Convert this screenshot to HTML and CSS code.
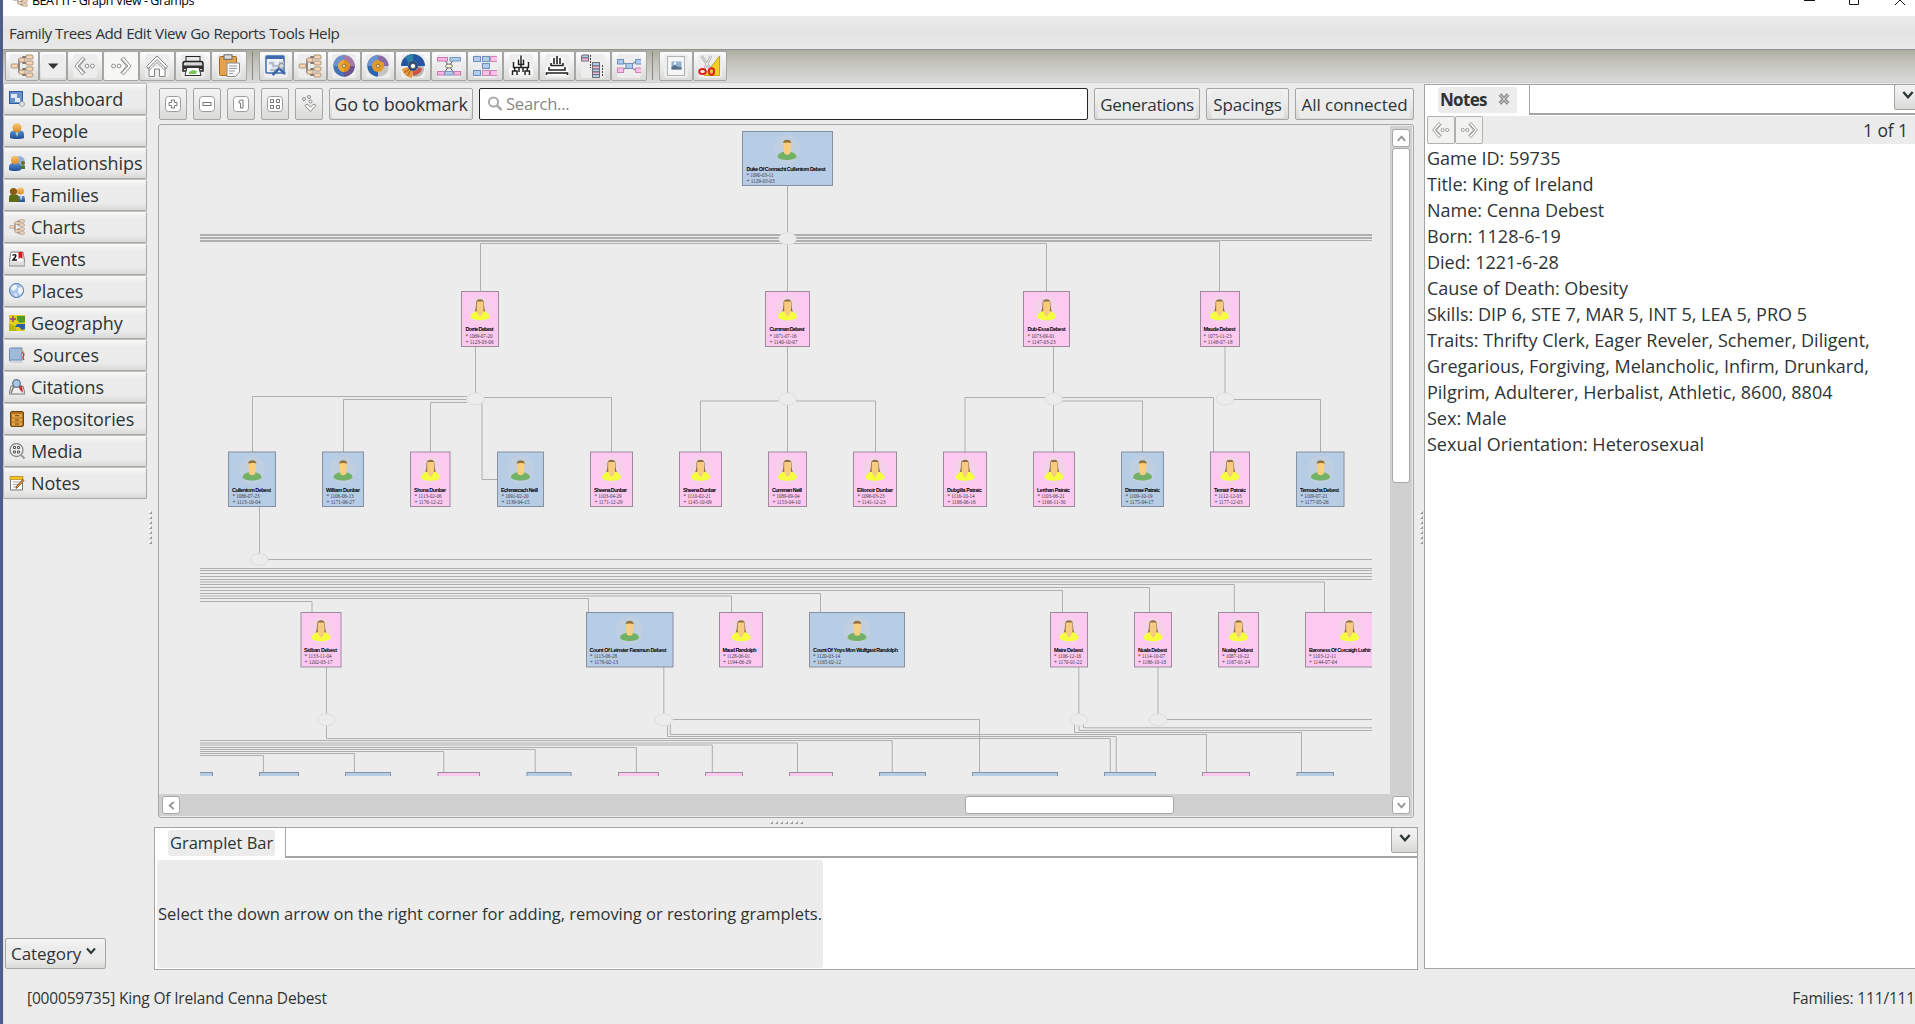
FILE: index.html
```html
<!DOCTYPE html>
<html lang="en">
<head>
<meta charset="utf-8">
<title>BEATTI - Graph View - Gramps</title>
<link rel="stylesheet" href="styles.css">
</head>
<body>
<svg class="defs" width="0" height="0">
  <defs>
    <linearGradient id="gold" x1="0" y1="0" x2="0" y2="1"><stop offset="0" stop-color="#f7c673"/><stop offset="1" stop-color="#dc8a22"/></linearGradient>
    <linearGradient id="navy" x1="0" y1="0" x2="0" y2="1"><stop offset="0" stop-color="#5b8fd0"/><stop offset="1" stop-color="#1f4d96"/></linearGradient>
    <symbol id="tree" viewBox="0 0 24 24">
      <path d="M5 12h4V6h4V3h5M13 6v3h5M9 12v6h4v-3h5M13 18v3h5" fill="none" stroke="#555" stroke-width="1.300"/>
      <g fill="#f3d6b6" stroke="#a98c70" stroke-width=".9"><rect x="1" y="10" width="7" height="4" rx="1"/><rect x="9" y="4" width="6" height="4" rx="1"/><rect x="9" y="16" width="6" height="4" rx="1"/><rect x="16" y="1" width="7" height="4" rx="1"/><rect x="16" y="7" width="7" height="4" rx="1"/><rect x="16" y="13" width="7" height="4" rx="1"/><rect x="16" y="19" width="7" height="4" rx="1"/></g>
    </symbol>
    <symbol id="prev" viewBox="0 0 24 24"><path d="M9.500 3l2 2-6.500 7 6.500 7-2 2L2 12z" fill="#fff" stroke="#8b8e8a"/><path d="M12.500 5L6.500 12l6 7" fill="none" stroke="#8b8e8a"/><circle cx="14" cy="12" r="1.900" fill="#fff" stroke="#8b8e8a"/><circle cx="19.500" cy="12" r="1.900" fill="#fff" stroke="#8b8e8a"/></symbol>
    <symbol id="next" viewBox="0 0 24 24"><g transform="matrix(-1 0 0 1 24 0)"><path d="M9.500 3l2 2-6.500 7 6.500 7-2 2L2 12z" fill="#fff" stroke="#8b8e8a"/><path d="M12.500 5L6.500 12l6 7" fill="none" stroke="#8b8e8a"/><circle cx="14" cy="12" r="1.900" fill="#fff" stroke="#8b8e8a"/><circle cx="19.500" cy="12" r="1.900" fill="#fff" stroke="#8b8e8a"/></g></symbol>
    <symbol id="chev" viewBox="0 0 12 12"><path d="M2 3.500l4 4.500 4-4.500" fill="none" stroke="currentColor" stroke-width="2"/></symbol>
    <symbol id="man" viewBox="0 0 28 32">
      <ellipse cx="14" cy="16" rx="13" ry="14.500" fill="#c9d2da" opacity=".5"/>
      <path d="M4.500 23.500c0-3.500 4-5 7-5h5c3 0 7 1.500 7 5-2 4-17 4-19 0z" fill="#73b266"/>
      <path d="M10.500 8h7.500v6c0 2-.8 2.500-.8 3.500v2.500c-1 1.500-5 1.500-6 0v-2.500c0-1-.7-1.500-.7-3.500z" fill="#f9ce7e"/>
      <path d="M10.200 9.500c-.5-4.500 8.500-4.500 8 0-2-.7-6-.7-8 0z" fill="#93743c"/>
    </symbol>
    <symbol id="woman" viewBox="0 0 28 32">
      <ellipse cx="14" cy="16" rx="12" ry="14" fill="#ecd6e4" opacity=".6"/>
      <path d="M10 9c0-4.500 8-4.500 8 0 0 5 .6 7 1.600 10H8.500c1-3 1.500-5 1.500-10z" fill="#8f6f42"/>
      <path d="M4.500 24c0-3.500 3.500-6.500 7.500-6.500h4c4 0 7.500 3 7.500 6.500-3 3.500-16 3.500-19 0z" fill="#f6ff3d"/>
      <path d="M10.700 8h6.800v7c0 3.500-.7 6-3.400 8.500-2.700-2.500-3.400-5-3.400-8.500z" fill="#f8cc80"/>
    </symbol>
  </defs>
</svg>
<div class="window">
  <header class="titlebar">
    <svg class="title-icon" width="16" height="16"><use href="#tree"/></svg>
    <span class="title-text">BEATTI - Graph View - Gramps</span>
    <svg class="controls" width="111" height="16" viewBox="0 0 111 16"><path d="M0 8.500h11M45.500 2.500h9v10h-9zM91 3l10 10M101 3l-10 10" fill="none" stroke="#111"/></svg>
  </header>
  <nav class="menubar"><span>Family Trees</span><span>Add</span><span>Edit</span><span>View</span><span>Go</span><span>Reports</span><span>Tools</span><span>Help</span></nav>
  <div class="toolbar">
    <button class="tb w34"><svg><use href="#tree"/></svg></button>
    <button class="tb w28"><svg viewBox="0 0 24 24"><path d="M7 9.500h10.500L12.200 15z" fill="#333"/></svg></button>
    <button class="tb"><svg><use href="#prev"/></svg></button>
    <button class="tb light"><svg><use href="#next"/></svg></button>
    <button class="tb"><svg viewBox="0 0 24 24"><path d="M4 13v9.500h5.500V15h5v7.500H20V13M3 14.500L1.500 12.500 12 2l10.500 10.500-1.500 2-9-9z" fill="#fff" stroke="#80837f"/><path d="M4 16.500l8-8 8 8" fill="none" stroke="#999"/></svg></button>
    <button class="tb"><svg viewBox="0 0 24 24"><rect x="5" y="2.500" width="14" height="6" fill="#e8e8e8" stroke="#222"/><path d="M2 10c0-1.500 1-2.500 2-2.500h16c1 0 2 1 2 2.500v7H2z" fill="#d7d7d7" stroke="#222" stroke-width="1.500"/><path d="M2 11.500h20v3.500H2z" fill="#333"/><path d="M6 13.500h12l2 8H4z" fill="#fff" stroke="#333"/><path d="M8 18l4-2 4 1-1 3H8z" fill="#7cc35d"/></svg></button>
    <button class="tb"><svg viewBox="0 0 24 24"><rect x="2.500" y="2.500" width="17" height="19" rx="1" fill="#e3a34c" stroke="#a36b1e"/><rect x="7" y=".8" width="8" height="4.500" fill="#ddd" stroke="#666"/><path d="M10 9h12.500v9l-4 4.500H10z" fill="#fafafa" stroke="#8a8a8a"/><path d="M12 12h8M12 14.500h8M12 17h6M12 19.500h4" stroke="#9a9a9a"/></svg></button>
    <i class="sep"></i>
    <button class="tb w34"><svg viewBox="0 0 24 24"><rect x="2" y="2" width="18" height="17" rx="1" fill="#eef2f7" stroke="#3f6cae" stroke-width="1.500"/><path d="M2 3.500h18" stroke="#3f6cae" stroke-width="3"/><path d="M5 9h4v3h7v-3h4M6 16h6" stroke="#b7bdc6" stroke-width="2.500" fill="none"/><path d="M8.500 21l7-7M16 15l5 5" stroke="#3b68a8" stroke-width="2.500"/><circle cx="17.500" cy="12" r="2.600" fill="#d0d5da" stroke="#8b929b"/></svg></button>
    <button class="tb w34"><svg><use href="#tree"/></svg></button>
    <button class="tb w34"><svg viewBox="0 0 24 24"><circle cx="12" cy="12" r="10.700" fill="#4573b5"/><path d="M12 12V1.300A10.700 10.700 0 0 1 22.700 12z" fill="#a97aa8"/><path d="M12 12h10.700A10.700 10.700 0 0 1 12 22.700z" fill="#71548f"/><path d="M12 12V1.300A10.700 10.700 0 0 0 1.300 12z" fill="#6c93cf"/><circle cx="12" cy="12" r="6" fill="#df9420"/><path d="M12 6a6 6 0 0 0 0 12z" fill="#e9a63d"/><circle cx="12" cy="12" r="1.800" fill="#d8d8c8" stroke="#a87324"/></svg></button>
    <button class="tb w34"><svg viewBox="0 0 24 24"><circle cx="14" cy="14" r="8.500" fill="#c4c4c4"/><path d="M12 1.300A10.700 10.700 0 1 0 12 22.700z" fill="#2f65ac"/><path d="M12 12V1.300A10.700 10.700 0 0 0 1.300 12z" fill="#6c93cf"/><path d="M12 12V1.300A10.700 10.700 0 0 1 22.700 12z" fill="#8a69a4"/><path d="M12 6a6 6 0 1 0 0 12 6 6 0 0 0 6-6V9z" fill="#e39b28"/><circle cx="12" cy="12" r="1.800" fill="#d8d8c8" stroke="#a87324"/></svg></button>
    <button class="tb"><svg viewBox="0 0 24 24"><circle cx="15" cy="15" r="8" fill="#b8b8b8"/><path d="M0 12a12 12 0 0 1 24 0h-7a5 5 0 0 0-10 0z" fill="#2456a5"/><path d="M4 3.500A12 12 0 0 1 12 0v7a5 5 0 0 0-4 2z" fill="#2e84a5"/><path d="M7 13a5 5 0 0 0 5 4l-1 7C5 23 2 19 1 15z" fill="#e8973a"/><path d="M3 18.500l5-3M6.500 22l3-5.500" stroke="#a75c16"/><path d="M12 17c3 0 5-1 5.500-4l3.500 2c-1 4-5 6-9 7z" fill="#cf5144"/><circle cx="12" cy="12" r="5" fill="#294b7d"/><circle cx="12" cy="12" r="2.600" fill="#fff" stroke="#555"/></svg></button>
    <button class="tb"><svg viewBox="0 0 24 24"><path d="M7 5l10 14M17 5L7 19" stroke="#555"/><rect x=".5" y="3.500" width="10" height="3.500" fill="#f8b7e3" stroke="#c878ae"/><rect x="13" y="3.500" width="10.500" height="3.500" fill="#aecbec" stroke="#7799c2"/><rect x=".5" y="17.500" width="7" height="3.500" fill="#f8b7e3" stroke="#c878ae"/><rect x="8" y="17.500" width="8" height="3.500" fill="#aecbec" stroke="#7799c2"/><rect x="17" y="17.500" width="6.500" height="3.500" fill="#f8b7e3" stroke="#c878ae"/><ellipse cx="12" cy="12" rx="3.500" ry="2" fill="#f7f4cc" stroke="#777"/></svg></button>
    <button class="tb"><svg viewBox="0 0 24 24"><g fill="#b3ccec" stroke="#6e8fc0"><rect x=".5" y="2.500" width="7" height="5"/><rect x="9.500" y="2.500" width="7" height="5"/><rect x="9.500" y="9.500" width="7" height="5"/><rect x=".5" y="16.500" width="7" height="5"/></g><g fill="#fcbfe8" stroke="#ce84b6"><path d="M24 2.500h-6.500v5H24M24 16.500h-6.500v5H24"/><rect x="9.500" y="16.500" width="7" height="5"/></g></svg></button>
    <button class="tb"><svg viewBox="0 0 24 24"><path d="M12 2v11M9 5v5h6V5M5 9v4h14V9M3 20v-3h5v3M5.500 17v-4M16 20v-3h5v3M18.500 17v-4M9 21v-7M15 21v-7" stroke="#fff" stroke-width="5" fill="none"/><path d="M12 1.500v12M9.500 5.500v5h5v-5M4.500 8v5.500h15V8M3.500 21v-4H8v4M5.700 17v-4M16 21v-4h4.500v4M18.300 17v-4M10 18v-4.500M14 18v-4.500" stroke="#222" stroke-width="1.500" fill="none"/></svg></button>
    <button class="tb"><svg viewBox="0 0 24 24"><path d="M12 2v9M8 3v8h8V3M4 12v4h16v-4M1 21v-2h22v2" stroke="#fff" stroke-width="5" fill="none"/><path d="M12 2v8M9 4v6M15 4v6M6 9v2.500h12V9M4 13v3h16v-3M1.500 21v-2h21v2" stroke="#222" stroke-width="1.600" fill="none"/></svg></button>
    <button class="tb"><svg viewBox="0 0 24 24"><path d="M9.500 1v13M21.500 11v12" stroke="#444" stroke-dasharray="2 1"/><g stroke="#666" stroke-width=".9"><rect x=".5" y="1" width="7" height="3" fill="#aecbec"/><rect x=".5" y="4" width="7" height="3" fill="#f8b7e3"/><rect x="11.500" y="8.500" width="7" height="3.500" fill="#aecbec"/><rect x="11.500" y="12" width="7" height="3" fill="#f8b7e3"/><rect x="11.500" y="15" width="7" height="3" fill="#aecbec"/><rect x="11.500" y="18" width="7" height="2.500" fill="#f8b7e3"/><rect x="11.500" y="20.500" width="7" height="3" fill="#aecbec"/></g></svg></button>
    <button class="tb"><svg viewBox="0 0 24 24"><path d="M6 8l5 4-5 4M18 8l-5 4 5 4" stroke="#666" fill="none"/><g fill="#aecbec" stroke="#6e8fc0"><rect x=".5" y="5.500" width="6" height="4.500"/><rect x="9" y="9.500" width="6.500" height="5"/><path d="M24 5.500h-5.500V10H24"/></g><g fill="#fcbfe8" stroke="#ce84b6"><rect x=".5" y="14" width="6" height="4.500"/><path d="M24 14h-5.500v4.500H24"/></g></svg></button>
    <i class="sep"></i>
    <button class="tb w34"><svg viewBox="0 0 24 24"><rect x="3.500" y="2.500" width="17" height="19" fill="#f5f5f5" stroke="#b3b3b3"/><rect x="7.500" y="7.500" width="10" height="8" fill="#90b0d4"/><path d="M7.500 13l3-2 4 2h3v2.500h-10z" fill="#5d7186"/><circle cx="11" cy="9.500" r="1.200" fill="#fff"/></svg></button>
    <button class="tb w34"><svg viewBox="0 0 24 24"><path d="M21.500 2v19.500h-15z" fill="#f2cf2b" stroke="#c9a513"/><path d="M3.500 2l9 13M13 2L6.500 15" stroke="#aaa" stroke-width="2.500"/><path d="M3.500 2l9 13M13 2L6.500 15" stroke="#f3f3f3" stroke-width="1"/><ellipse cx="4.500" cy="17.500" rx="3.300" ry="2.500" fill="none" stroke="#d22" stroke-width="2"/><ellipse cx="13.500" cy="17.500" rx="2.600" ry="3.200" fill="none" stroke="#d22" stroke-width="2"/></svg></button>
  </div>
  <div class="workspace">
    <aside class="sidebar">
      <div class="nav"><svg viewBox="0 0 16 16"><rect x=".5" y=".5" width="13" height="12" fill="#6691cb" stroke="#2f5b9c"/><path d="M2 3h6v4H2zM6 7h5v4H6z" fill="#dfe8f3"/><circle cx="13" cy="13" r="2.500" fill="#e3e3e3" stroke="#9aa"/></svg><span>Dashboard</span></div>
      <div class="nav"><svg viewBox="0 0 16 16"><path d="M1 15V11c0-3 3-3.500 4-3.500h6c2 0 4 1 4 3.500v4c-3 1.300-11 1.300-14 0z" fill="url(#navy)"/><path d="M8 8l1.500 2L8 14l-1.500-4z" fill="#9cc"/><circle cx="8" cy="4.700" r="4.500" fill="url(#gold)"/></svg><span>People</span></div>
      <div class="nav"><svg viewBox="0 0 16 16"><circle cx="10" cy="7" r="6" fill="#8fb2dd"/><path d="M0 15v-3c0-3 2-4 4-4h4c2 0 4 1 4 4v3c-3 1.300-9 1.300-12 0z" fill="url(#navy)"/><circle cx="6" cy="5" r="4.200" fill="url(#gold)"/><circle cx="14" cy="8" r="2" fill="#7a6a22"/><path d="M11.500 14v-3.500h4.500V14z" fill="#447a37"/></svg><span>Relationships</span></div>
      <div class="nav"><svg viewBox="0 0 16 16"><path d="M9 15V9h6c1 0 1 5 1 6z" fill="url(#navy)"/><path d="M12 8l1 2-1 4-1-4z" fill="#dde"/><circle cx="11.500" cy="4" r="3.600" fill="url(#gold)"/><path d="M0 15v-4c0-3 2-3.500 3-3.500h4c1 0 3 1 3 3.500v4z" fill="#5d6d16"/><circle cx="4.500" cy="4.500" r="3.600" fill="#8b5c14"/></svg><span>Families</span></div>
      <div class="nav"><svg><use href="#tree"/></svg><span>Charts</span></div>
      <div class="nav"><svg viewBox="0 0 16 16"><path d="M2 1h12l2 11v3H0v-3z" fill="#ddd" stroke="#888"/><rect x="2" y="2" width="12" height="8.500" fill="#fff"/><path d="M9.500 1h4v7l-2-1.500-2 1.500z" fill="#d4151d"/><path d="M3.500 4.500c3-2 4 0 2.500 2L4 9h4" fill="none" stroke="#111" stroke-width="1.500"/></svg><span>Events</span></div>
      <div class="nav"><svg viewBox="0 0 16 16"><circle cx="7.500" cy="7.500" r="7" fill="#a9c7e8" stroke="#4f78ad"/><path d="M3 3l4-1.500 1 3L5 8 2 6zM9 5l4-1 1 4-3 4-2-3zM5 10l3 1-1 3z" fill="#f2f6fb"/></svg><span>Places</span></div>
      <div class="nav"><svg viewBox="0 0 16 16"><rect width="16" height="16" fill="#e0d020"/><path d="M8 1h8v6l-5 1-3-3z" fill="#4b9c26"/><path d="M8 9h8v5l-3 1-3-3-4 0z" fill="#2c5fa8"/><path d="M4 1v6M1 4h6" stroke="#9a3a9a" stroke-width="1.500"/><path d="M0 9l5 1 3 6H0z" fill="#b9b616"/></svg><span>Geography</span></div>
      <div class="nav wide"><svg viewBox="0 0 16 16"><path d="M2 1h11v12H2c-1 0-1.500.5-1.500 1V2.500C.5 1.500 1 1 2 1z" fill="#9fb9da" stroke="#6c89b3"/><path d="M1 13.500h12V15H1z" fill="#f2f2f2" stroke="#8a9cb8" stroke-width=".6"/><path d="M13 5l2 2-1 4 1 2" stroke="#d33" fill="none" stroke-width="1.300"/><path d="M13 2l1.500 3" stroke="#db3"/></svg><span>Sources</span></div>
      <div class="nav"><svg viewBox="0 0 16 16"><path d="M2 7h12l2 8H0z" fill="#efefef" stroke="#777"/><path d="M9 7h4l1 7-3-3z" fill="#c93030"/><path d="M5 7l-3 7" stroke="#777" stroke-width="1.500"/><circle cx="7.500" cy="4.500" r="3.800" fill="#a9c5e6" stroke="#5f7896" stroke-width="1.300"/></svg><span>Citations</span></div>
      <div class="nav"><svg viewBox="0 0 16 16"><rect x="1.500" y=".5" width="13" height="15" rx="1.500" fill="#b0711f" stroke="#70430f"/><rect x="3" y="3" width="10" height="3.500" fill="#e3a748"/><rect x="3" y="7.500" width="10" height="3" fill="#e3a748"/><rect x="3" y="11.500" width="10" height="3" fill="#e3a748"/><path d="M6 4.700h4M6 9h4M6 13h4" stroke="#70430f"/></svg><span>Repositories</span></div>
      <div class="nav"><svg viewBox="0 0 16 16"><circle cx="7.500" cy="7" r="6.500" fill="#ececec" stroke="#858a85" stroke-width="1.300"/><path d="M12 12l3.500 3.500" stroke="#999" stroke-width="2"/><path d="M4.500 3.500h2v2h-2zM8.500 3.500h2v2h-2zM4.500 8h2v2h-2zM8.500 8h2v2h-2z" fill="#fff" stroke="#555"/></svg><span>Media</span></div>
      <div class="nav"><svg viewBox="0 0 16 16"><path d="M1.500 2h12v13h-12z" fill="#fbfbfb" stroke="#777"/><path d="M1 1.500h13v3H1z" fill="#f2c32a" stroke="#b8860b" stroke-width=".7"/><path d="M4 7h7M4 9.500h6M4 12h5" stroke="#aaa"/><path d="M15 5.500l-6.500 7-1.500 1 .3-2 6.200-7z" fill="#e99a3c" stroke="#5a3a12" stroke-width=".7"/></svg><span>Notes</span></div>
      <div class="category"><span>Category</span><svg width="12" height="12"><use href="#chev"/></svg></div>
    </aside>
    <div class="grip tall"><i></i><i></i><i></i><i></i><i></i><i></i><i></i></div>
    <main class="center">
      <div class="viewbar">
        <button class="vb"><svg viewBox="0 0 18 18"><rect x="1.500" y="1.500" width="15" height="15" rx="3" fill="#fff" stroke="#9a9d99"/><path d="M7.500 5h3v2.500H13v3h-2.500V13h-3v-2.500H5v-3h2.500z" fill="#fff" stroke="#777"/></svg></button>
        <button class="vb"><svg viewBox="0 0 18 18"><rect x="1.500" y="1.500" width="15" height="15" rx="3" fill="#fff" stroke="#9a9d99"/><rect x="5" y="7.500" width="8" height="3" fill="#fff" stroke="#777"/></svg></button>
        <button class="vb"><svg viewBox="0 0 18 18"><rect x="1.500" y="1.500" width="15" height="15" rx="3" fill="#fff" stroke="#9a9d99"/><path d="M7 6l2-1h2v8H8.500V8H7z" fill="#fff" stroke="#777"/></svg></button>
        <button class="vb"><svg viewBox="0 0 18 18"><rect x="1.500" y="1.500" width="15" height="15" rx="3" fill="#fff" stroke="#9a9d99"/><path d="M4.500 7.500v-3h3v3zM10.500 7.500v-3h3v3zM4.500 13.500v-3h3v3zM10.500 13.500v-3h3v3z" fill="#fff" stroke="#777"/></svg></button>
        <button class="vb"><svg viewBox="0 0 18 18"><g fill="#fff" stroke="#858885"><circle cx="4" cy="4" r="1.500"/><circle cx="9" cy="2" r="1.500"/><circle cx="10.500" cy="6.500" r="1.500"/><path d="M5 10.500l2-1.500 3.500 3L14 9l2 1.500-5.500 6z"/></g></svg></button>
        <button class="txt go"><span>Go to bookmark</span></button>
        <div class="search"><svg width="16" height="16" viewBox="0 0 16 16"><circle cx="6.500" cy="6" r="4.600" fill="none" stroke="#aaacaa" stroke-width="2"/><path d="M10 9.500l4.500 4.500" stroke="#aaacaa" stroke-width="2.500"/></svg><span>Search...</span></div>
        <button class="txt gen"><span>Generations</span></button>
        <button class="txt spa"><span>Spacings</span></button>
        <button class="txt all"><span>All connected</span></button>
      </div>
      <section class="graph">
        <svg class="canvas" viewBox="159 125 1231 669" width="1231" height="669">
          <clipPath id="page"><rect x="200" y="125" width="1172" height="651"/></clipPath>
          <g clip-path="url(#page)">
            <g class="edges">
              <path class="band" d="M200 235h1172M200 238h1172M200 241h1019.500"/>
              <path d="M1219 240.500h153M787.500 241.500h432v50M480.500 291v-47.500h566V291M787.500 185v47M787.500 244v47"/>
              <path d="M475.500 346v47M467 396.500H252.500V452M467 399.500H343.500V452M467 402.500H430.500V452M484 397.500h127.500V452M482 403v76.500h16"/>
              <path d="M787.500 346v47M787.500 405v47M779 401H700.500v51M796 401h79.500v51"/>
              <path d="M1053.500 346v47M1053.500 405v47M1045 397.500H965V452M1062 397.500h151.500V452M1062 401h80.500v51"/>
              <path d="M1225 346v47M1233 399.500h87.500V452"/>
              <path d="M259.500 506v47M268 559.500h1104"/>
              <path d="M200 568.500h1172M200 570.500h1172M200 573.500h1172M200 576.500h1172M200 579.500h1172M200 582h1124.500v30M200 584.500h1034.300V612M200 587.500h949.500V612M200 590.500h862.500V612M200 593.500h620.500V612M200 596h531.500v16M200 598.500h388.500V612M200 601.500h112V612"/>
              <path d="M326.500 667v47M326.500 726v12.500h783.800V773M663.800 667v47M672 719.500h307.500V773M667.500 724v12.500h448.700V773M670.300 724v10.500h536.200V773"/>
              <path d="M1078.800 667v47M1074.500 724v8.500h227V773M1079 726v4.500h293M1083.500 724.500v3.300H1372M1158 667v47M1166 719.500h206"/>
              <path d="M200 740.500h692.200V773M200 743h597.500v30M200 745h512.300v28M200 747.500h436.300V773M200 749.500h335.200V773M200 751.500h243.800V773M200 753.500h154.400V773M200 755.500h63.400V773"/>
            </g>
            <g class="joints"><ellipse cx="787.500" cy="238.700"/><ellipse cx="475.500" cy="399"/><ellipse cx="787.500" cy="399"/><ellipse cx="1053.700" cy="399"/><ellipse cx="1225" cy="399"/><ellipse cx="259" cy="559.500"/><ellipse cx="326.500" cy="719.800"/><ellipse cx="663.700" cy="719.800"/><ellipse cx="1078.800" cy="719.800"/><ellipse cx="1158" cy="719.800"/></g>

            <g class="m" transform="translate(742.500 131.500)"><rect width="90" height="54"/><use href="#man" x="30.500" y="2" width="28" height="32"/><text class="n" x="4" y="39.500" textLength="79">Duke Of Connacht Cullentom Debest</text><text class="d" x="4" y="45.500" textLength="27">* 1090-03-11</text><text class="d" x="4" y="51.500" textLength="28">+ 1129-03-03</text></g>

            <g class="f" transform="translate(461.500 291.500)"><rect width="37" height="55"/><use href="#woman" x="4.500" y="2" width="28" height="32"/><text class="n" x="4" y="39.500" textLength="28">Dorrie Debest</text><text class="d" x="4" y="46" textLength="27">* 1069-07-20</text><text class="d" x="4" y="52" textLength="28">+ 1123-03-06</text></g>
            <g class="f" transform="translate(765.500 291.500)"><rect width="44" height="55"/><use href="#woman" x="8" y="2" width="28" height="32"/><text class="n" x="4" y="39.500" textLength="35">Cumman Debest</text><text class="d" x="4" y="46" textLength="27">* 1071-07-16</text><text class="d" x="4" y="52" textLength="28">+ 1140-10-07</text></g>
            <g class="f" transform="translate(1023.500 291.500)"><rect width="46" height="55"/><use href="#woman" x="9" y="2" width="28" height="32"/><text class="n" x="4" y="39.500" textLength="38">Dub-Essa Debest</text><text class="d" x="4" y="46" textLength="27">* 1073-09-01</text><text class="d" x="4" y="52" textLength="28">+ 1147-03-23</text></g>
            <g class="f" transform="translate(1200.500 291.500)"><rect width="39" height="55"/><use href="#woman" x="5" y="2" width="28" height="32"/><text class="n" x="3" y="39.500" textLength="32">Maude Debest</text><text class="d" x="3" y="46" textLength="28">* 1075-11-23</text><text class="d" x="3" y="52" textLength="29">+ 1148-07-18</text></g>

            <g class="m" transform="translate(228.500 452)"><rect width="47" height="54.500"/><use href="#man" x="9.500" y="2" width="28" height="32"/><text class="n" x="3.500" y="40" textLength="39">Cullentom Debest</text><text class="d" x="4" y="45.500" textLength="27">* 1086-07-23</text><text class="d" x="4" y="51.500" textLength="28">+ 1113-10-04</text></g>
            <g class="m" transform="translate(322.500 452)"><rect width="41" height="54.500"/><use href="#man" x="6.500" y="2" width="28" height="32"/><text class="n" x="3.500" y="40" textLength="34">William Dunbar</text><text class="d" x="4" y="45.500" textLength="27">* 1106-06-13</text><text class="d" x="4" y="51.500" textLength="28">+ 1171-06-27</text></g>
            <g class="f" transform="translate(410.500 452)"><rect width="39.500" height="54.500"/><use href="#woman" x="6" y="2" width="28" height="32"/><text class="n" x="3.500" y="40" textLength="32">Shona Dunbar</text><text class="d" x="4" y="45.500" textLength="27">* 1113-02-06</text><text class="d" x="4" y="51.500" textLength="28">+ 1176-12-22</text></g>
            <g class="m" transform="translate(497.500 452)"><rect width="46" height="54.500"/><use href="#man" x="9" y="2" width="28" height="32"/><text class="n" x="3.500" y="40" textLength="37">Echmarcach Neill</text><text class="d" x="4" y="45.500" textLength="27">* 1091-02-20</text><text class="d" x="4" y="51.500" textLength="28">+ 1139-04-15</text></g>
            <g class="f" transform="translate(590.500 452)"><rect width="42" height="54.500"/><use href="#woman" x="7" y="2" width="28" height="32"/><text class="n" x="3.500" y="40" textLength="33">Sheena Dunbar</text><text class="d" x="4" y="45.500" textLength="27">* 1103-04-29</text><text class="d" x="4" y="51.500" textLength="28">+ 1171-12-29</text></g>
            <g class="f" transform="translate(679.500 452)"><rect width="42" height="54.500"/><use href="#woman" x="7" y="2" width="28" height="32"/><text class="n" x="3.500" y="40" textLength="33">Sheena Dunbar</text><text class="d" x="4" y="45.500" textLength="27">* 1110-02-21</text><text class="d" x="4" y="51.500" textLength="28">+ 1145-10-09</text></g>
            <g class="f" transform="translate(768.500 452)"><rect width="38" height="54.500"/><use href="#woman" x="5" y="2" width="28" height="32"/><text class="n" x="3.500" y="40" textLength="30">Cumman Neill</text><text class="d" x="4" y="45.500" textLength="27">* 1089-09-04</text><text class="d" x="4" y="51.500" textLength="28">+ 1153-04-10</text></g>
            <g class="f" transform="translate(853.500 452)"><rect width="43" height="54.500"/><use href="#woman" x="7.500" y="2" width="28" height="32"/><text class="n" x="3.500" y="40" textLength="36">Ellionoir Dunbar</text><text class="d" x="4" y="45.500" textLength="27">* 1096-03-23</text><text class="d" x="4" y="51.500" textLength="28">+ 1141-12-23</text></g>
            <g class="f" transform="translate(943.500 452)"><rect width="43" height="54.500"/><use href="#woman" x="7.500" y="2" width="28" height="32"/><text class="n" x="3.500" y="40" textLength="35">Dubgilla Patraic</text><text class="d" x="4" y="45.500" textLength="27">* 1116-10-14</text><text class="d" x="4" y="51.500" textLength="28">+ 1166-06-16</text></g>
            <g class="f" transform="translate(1033.500 452)"><rect width="41" height="54.500"/><use href="#woman" x="6.500" y="2" width="28" height="32"/><text class="n" x="3.500" y="40" textLength="33">Lerthan Patraic</text><text class="d" x="4" y="45.500" textLength="27">* 1103-06-21</text><text class="d" x="4" y="51.500" textLength="28">+ 1166-11-30</text></g>
            <g class="m" transform="translate(1121.500 452)"><rect width="42" height="54.500"/><use href="#man" x="7" y="2" width="28" height="32"/><text class="n" x="3.500" y="40" textLength="35">Dimmae Patraic</text><text class="d" x="4" y="45.500" textLength="27">* 1109-10-19</text><text class="d" x="4" y="51.500" textLength="28">+ 1175-04-17</text></g>
            <g class="f" transform="translate(1210.500 452)"><rect width="39" height="54.500"/><use href="#woman" x="5.500" y="2" width="28" height="32"/><text class="n" x="3.500" y="40" textLength="32">Temair Patraic</text><text class="d" x="4" y="45.500" textLength="27">* 1112-12-03</text><text class="d" x="4" y="51.500" textLength="28">+ 1177-12-03</text></g>
            <g class="m" transform="translate(1296.500 452)"><rect width="47.500" height="54.500"/><use href="#man" x="10" y="2" width="28" height="32"/><text class="n" x="3.500" y="40" textLength="39">Temsacha Debest</text><text class="d" x="4" y="45.500" textLength="27">* 1109-07-21</text><text class="d" x="4" y="51.500" textLength="28">+ 1177-05-26</text></g>

            <g class="f" transform="translate(301 612.500)"><rect width="40" height="54.500"/><use href="#woman" x="6" y="2" width="28" height="32"/><text class="n" x="3" y="39.500" textLength="33">Sidban Debest</text><text class="d" x="3.500" y="45" textLength="27">* 1133-11-04</text><text class="d" x="3.500" y="51.500" textLength="28">+ 1202-03-17</text></g>
            <g class="m" transform="translate(586.500 612.500)"><rect width="86.500" height="54.500"/><use href="#man" x="29" y="2" width="28" height="32"/><text class="n" x="3" y="39.500" textLength="77">Count Of Leinster Faramun Debest</text><text class="d" x="3.500" y="45" textLength="27">* 1113-06-28</text><text class="d" x="3.500" y="51.500" textLength="28">+ 1176-02-13</text></g>
            <g class="f" transform="translate(719.500 612.500)"><rect width="43" height="54.500"/><use href="#woman" x="7.500" y="2" width="28" height="32"/><text class="n" x="3" y="39.500" textLength="34">Maud Randolph</text><text class="d" x="3.500" y="45" textLength="27">* 1128-06-01</text><text class="d" x="3.500" y="51.500" textLength="28">+ 1194-06-29</text></g>
            <g class="m" transform="translate(809.500 612.500)"><rect width="95" height="54.500"/><use href="#man" x="33.500" y="2" width="28" height="32"/><text class="n" x="3.500" y="39.500" textLength="85">Count Of Ynys Mon Wulfgast Randolph</text><text class="d" x="3.500" y="45" textLength="27">* 1120-03-14</text><text class="d" x="3.500" y="51.500" textLength="28">+ 1165-02-12</text></g>
            <g class="f" transform="translate(1050.500 612.500)"><rect width="37" height="54.500"/><use href="#woman" x="4.500" y="2" width="28" height="32"/><text class="n" x="3.500" y="39.500" textLength="29">Maire Debest</text><text class="d" x="3.500" y="45" textLength="27">* 1106-12-16</text><text class="d" x="3.500" y="51.500" textLength="28">+ 1170-01-22</text></g>
            <g class="f" transform="translate(1134.500 612.500)"><rect width="37" height="54.500"/><use href="#woman" x="4.500" y="2" width="28" height="32"/><text class="n" x="3.500" y="39.500" textLength="29">Nuala Debest</text><text class="d" x="3.500" y="45" textLength="27">* 1114-10-07</text><text class="d" x="3.500" y="51.500" textLength="28">+ 1186-10-18</text></g>
            <g class="f" transform="translate(1218.500 612.500)"><rect width="40" height="54.500"/><use href="#woman" x="6" y="2" width="28" height="32"/><text class="n" x="3.500" y="39.500" textLength="31">Nualay Debest</text><text class="d" x="3.500" y="45" textLength="27">* 1087-10-22</text><text class="d" x="3.500" y="51.500" textLength="28">+ 1167-01-24</text></g>
            <g class="f" transform="translate(1305.500 612.500)"><rect width="88" height="54.500"/><use href="#woman" x="30" y="2" width="28" height="32"/><text class="n" x="3.500" y="39.500" textLength="62">Baroness Of Corcaigh Luthir</text><text class="d" x="3.500" y="45" textLength="27">* 1103-12-11</text><text class="d" x="3.500" y="51.500" textLength="28">+ 1144-07-04</text></g>

            <g class="m"><rect x="180" y="772.500" width="32.500" height="54"/><rect x="259.500" y="772.500" width="39" height="54"/><rect x="345.500" y="772.500" width="45" height="54"/><rect x="527" y="772.500" width="44" height="54"/><rect x="879.500" y="772.500" width="46" height="54"/><rect x="972.500" y="772.500" width="85" height="54"/><rect x="1104.500" y="772.500" width="51" height="54"/><rect x="1297" y="772.500" width="36.500" height="54"/></g>
            <g class="f"><rect x="438" y="772.500" width="41.500" height="54"/><rect x="618.500" y="772.500" width="40" height="54"/><rect x="705.500" y="772.500" width="37" height="54"/><rect x="789.500" y="772.500" width="43" height="54"/><rect x="1202.500" y="772.500" width="47" height="54"/></g>
          </g>
        </svg>
        <div class="vscroll"><b class="step up"><svg width="12" height="12"><use href="#chev"/></svg></b><b class="vthumb"></b></div>
        <div class="hscroll"><b class="step left"><svg width="12" height="12"><use href="#chev"/></svg></b><b class="hthumb"></b><b class="step down"><svg width="12" height="12"><use href="#chev"/></svg></b></div>
      </section>
      <div class="grip wide-grip"><i></i><i></i><i></i><i></i><i></i><i></i><i></i></div>
      <section class="gramplets">
        <div class="tabs"><div class="tab"><span>Gramplet Bar</span></div><div class="rail"><button class="corner"><svg width="14" height="14"><use href="#chev"/></svg></button></div></div>
        <div class="hint"><span>Select the down arrow on the right corner for adding, removing or restoring gramplets.</span></div>
      </section>
    </main>
    <div class="grip tall end"><i></i><i></i><i></i><i></i><i></i><i></i><i></i></div>
    <section class="notes">
      <div class="tabs"><div class="tab bold"><span>Notes</span><svg width="12" height="12" viewBox="0 0 12 12"><path d="M2 1.500l8 9M10 1.500l-8 9" stroke="#8a8d89" stroke-width="3.600"/><path d="M2.500 2l7 8M9.500 2l-7 8" stroke="#ddd" stroke-width="1"/></svg></div><div class="rail"><button class="corner"><svg width="14" height="14"><use href="#chev"/></svg></button></div></div>
      <div class="pager"><button><svg width="20" height="20"><use href="#prev"/></svg></button><button><svg width="20" height="20"><use href="#next"/></svg></button><span>1 of 1</span></div>
      <div class="note"><p>Game ID: 59735</p><p>Title: King of Ireland</p><p>Name: Cenna Debest</p><p>Born: 1128-6-19</p><p>Died: 1221-6-28</p><p>Cause of Death: Obesity</p><p>Skills: DIP 6, STE 7, MAR 5, INT 5, LEA 5, PRO 5</p><p>Traits: Thrifty Clerk, Eager Reveler, Schemer, Diligent,</p><p>Gregarious, Forgiving, Melancholic, Infirm, Drunkard,</p><p>Pilgrim, Adulterer, Herbalist, Athletic, 8600, 8804</p><p>Sex: Male</p><p>Sexual Orientation: Heterosexual</p></div>
    </section>
  </div>
  <footer class="status"><span>[000059735] King Of Ireland Cenna Debest</span><span class="count">Families: 111/111</span></footer>
</div>
</body>
</html>
```
FILE: styles.css
```css
* { box-sizing: border-box; }
body {
  margin: 0;
  width: 1915px;
  height: 1024px;
  overflow: hidden;
  background: #ececec;
  color: #2e3436;
  font: 18px/26px "Open Sans", "Noto Sans", sans-serif;
}
button {
  font: inherit;
  color: inherit;
  padding: 0;
  margin: 0;
}
p { margin: 0; }
svg { display: block; flex: none; }
span { white-space: nowrap; }
.defs { position: absolute; }

.window {
  display: flex;
  flex-direction: column;
  height: 1024px;
  border-left: 3px solid #4f5d8b;
  box-shadow: inset 1px 0 #dcdee4;
}

/* title and menu */
.titlebar {
  display: flex;
  align-items: flex-start;
  height: 16px;
  background: #fff;
  overflow: hidden;
}
.title-icon { margin: -9px 4px 0 9px; }
.title-text {
  font: 12.500px/16px "Open Sans", "Noto Sans", sans-serif;
  color: #000;
  margin-top: -7px;
  letter-spacing: -0.450px;
}
.controls { margin: -8px 0 0 auto; }
.menubar {
  display: flex;
  gap: 4px;
  height: 34px;
  padding: 5px 0 0 6px;
  background: linear-gradient(#ececec, #e4e4e4 50%, #e9e9e9);
  border-bottom: 1px solid #8f918d;
  font-size: 15.200px;
  line-height: 24px;
  letter-spacing: -0.500px;
}

/* main toolbar */
.toolbar {
  display: flex;
  height: 33px;
  padding: 1px 0 0 2px;
  background: linear-gradient(#adada2, #c6c6bf 45%, #d9d9d7);
  border-bottom: 1px solid #d0d0cf;
}
.tb {
  width: 36px;
  height: 30px;
  display: grid;
  place-items: center;
  border: 1px solid #a3a6a2;
  border-radius: 2px;
  background: linear-gradient(#fdfdfd, #ebebeb 50%, #d9dbd7);
}
.tb svg {
  width: 24px;
  height: 24px;
  background: #ededed;
  border-radius: 3px;
}
.tb.light, .tb.light svg { background: #f7f7f6; }
.w34 { width: 34px; }
.w28 { width: 28px; }
.sep {
  width: 1px;
  height: 29px;
  margin: 0 6px 0 5px;
  background: #858783;
}

.workspace { display: flex; height: 888px; }

/* category sidebar */
.sidebar {
  width: 144px;
  flex: none;
  display: flex;
  flex-direction: column;
}
.nav {
  height: 32px;
  display: flex;
  align-items: center;
  padding-left: 5px;
  border: 1px solid #a7a9a5;
  border-left-color: #b5b7b3;
  border-top-color: #c0c2be;
  border-radius: 2px;
  background: linear-gradient(#fafafa, #ececec 20%, #ececec 75%, #d9dbd7);
}
.nav svg { width: 16px; height: 16px; margin-top: -1px; }
.nav span { margin-left: 6px; letter-spacing: -0.070px; }
.nav.wide span { margin-left: 8px; }
.category {
  display: flex;
  align-items: center;
  margin: auto 0 2px 2px;
  width: 101px;
  height: 31px;
  padding-left: 5px;
  border: 1px solid #a3a6a2;
  border-radius: 2px;
  background: linear-gradient(#f5f5f5, #ececec 30%, #ececec 70%, #d9dbd7);
  font-size: 17px;
  letter-spacing: -0.050px;
}
.category svg { margin: -5px 0 0 4px; }

/* pane handles */
.grip { display: flex; gap: 2px; justify-content: center; align-items: center; }
.grip i { width: 3px; height: 3px; background: linear-gradient(135deg, #fff 35%, #9a9c99 60%); }
.tall { flex: none; flex-direction: column; width: 7px; }
.tall.end { width: 6px; }
.wide-grip { height: 9px; }

/* central column */
.center { width: 1264px; padding-top: 5px; display: flex; flex-direction: column; flex: none; }
.viewbar { display: flex; gap: 6px; height: 32px; margin: 0 4px 4px 5px; }
.vb, .txt, .corner {
  display: grid;
  place-items: center;
  border: 1px solid #a3a6a2;
  border-radius: 2px;
  background: linear-gradient(#f3f3f3, #ececec 40%, #d8dad6);
}
.vb { width: 28px; }
.vb svg { width: 18px; height: 18px; }
.txt span { background: #ececec; border-radius: 3px; padding: 0 2px; line-height: 27px; }
.go { width: 144px; letter-spacing: -0.200px; }
.gen { width: 106px; font-size: 17px; letter-spacing: -0.350px; }
.spa { width: 83px; font-size: 17px; letter-spacing: -0.100px; }
.all { width: 119px; font-size: 17px; letter-spacing: -0.050px; }
.search {
  flex: 1;
  display: flex;
  align-items: center;
  padding-left: 7px;
  border: 1px solid #222728;
  border-radius: 2px;
  background: #fff;
  color: #858786;
  font-size: 16.500px;
}
.search span { margin-left: 3px; letter-spacing: -0.200px; }

.graph {
  display: grid;
  grid-template: 669px 22px / 1231px 22px;
  width: 1256px;
  height: 694px;
  margin-left: 4px;
  border: 1px solid #a5a7a4;
  border-radius: 3px;
  flex: none;
}
.edges { fill: none; stroke: #aeafae; stroke-width: 1; }
.edges .band { stroke-width: 2; }
.joints ellipse { rx: 8.800px; ry: 6px; fill: #ececec; stroke: #dedede; }
.m rect { fill: #b7cde6; stroke: #8590a0; }
.f rect { fill: #fec9f0; stroke: #9c8c9b; }
.n { font: bold 5.400px "Liberation Sans", Arial, sans-serif; fill: #000; }
.d { font: 5.200px "Liberation Serif", "Times New Roman", serif; fill: #3c3744; }
.vscroll { background: #d0d0d0; padding: 3px 2px 0; margin-top: 1px; }
.step, .vthumb, .hthumb {
  display: grid;
  place-items: center;
  background: #fff;
  border: 1px solid #a7a9a6;
  border-radius: 3px;
  color: #949694;
}
.step { width: 18px; height: 18px; }
.step svg { width: 11px; height: 11px; }
.up svg { transform: rotate(180deg); }
.left svg { transform: rotate(90deg); }
.vthumb { height: 335px; margin-top: 1px; width: 18px; }
.hscroll { grid-column: 1 / 3; background: #d0d0d0; display: flex; padding: 2px 2px 0 3px; }
.hthumb { width: 209px; height: 18px; margin-left: 785px; }
.down { margin-left: auto; }

/* tabbed panes */
.gramplets, .notes { background: #fff; border: 1px solid #a3a5a2; display: flex; flex-direction: column; }
.gramplets { height: 143px; }
.tabs { display: flex; height: 30px; flex: none; }
.tab { width: 130px; padding: 2px 0 0 13px; font-size: 16.500px; }
.tab span { display: inline-block; background: #ececec; border-radius: 3px; padding: 0 2px; letter-spacing: -0.020px; }
.rail { flex: 1; border-left: 1px solid #a3a5a2; border-bottom: 2px solid #a5a5a5; display: flex; justify-content: flex-end; }
.corner { width: 27px; height: 26px; margin: -1px -1px 0 0; padding-bottom: 4px; }
.hint {
  width: 666px;
  height: 108px;
  margin: 2px 0 0 2px;
  display: flex;
  align-items: center;
  border-radius: 3px;
  background: #ececec;
  font-size: 16.500px;
  letter-spacing: -0.030px;
}
.hint span { margin-left: 1px; }
.notes { width: 500px; flex: none; margin: 1px 0 2px; }
.tab.bold { display: flex; width: 104px; font-weight: bold; font-size: 17px; }
.tab.bold span { height: 26px; letter-spacing: -0.700px; border-radius: 3px 0 0 3px; width: 60px; }
.tab.bold svg { width: 19px; height: 26px; padding: 0 7px 2px 0; background: #ececec; }
.notes .corner { margin-right: 2px; }
.pager { display: flex; height: 28px; margin: 1px 0 0 2px; background: #ececec; flex: none; }
.pager button { width: 28px; height: 28px; display: grid; place-items: center; border: 1px solid #b0b2af; background: #f2f2f1; border-radius: 2px; }
.pager span { margin: 1px 15px 0 auto; letter-spacing: -0.100px; font-size: 17.500px; }
.note { padding: 1px 0 0 2px; white-space: nowrap; }

.status { display: flex; justify-content: space-between; padding: 14px 0 0 24px; font-size: 15.500px; letter-spacing: -0.170px; }
```
